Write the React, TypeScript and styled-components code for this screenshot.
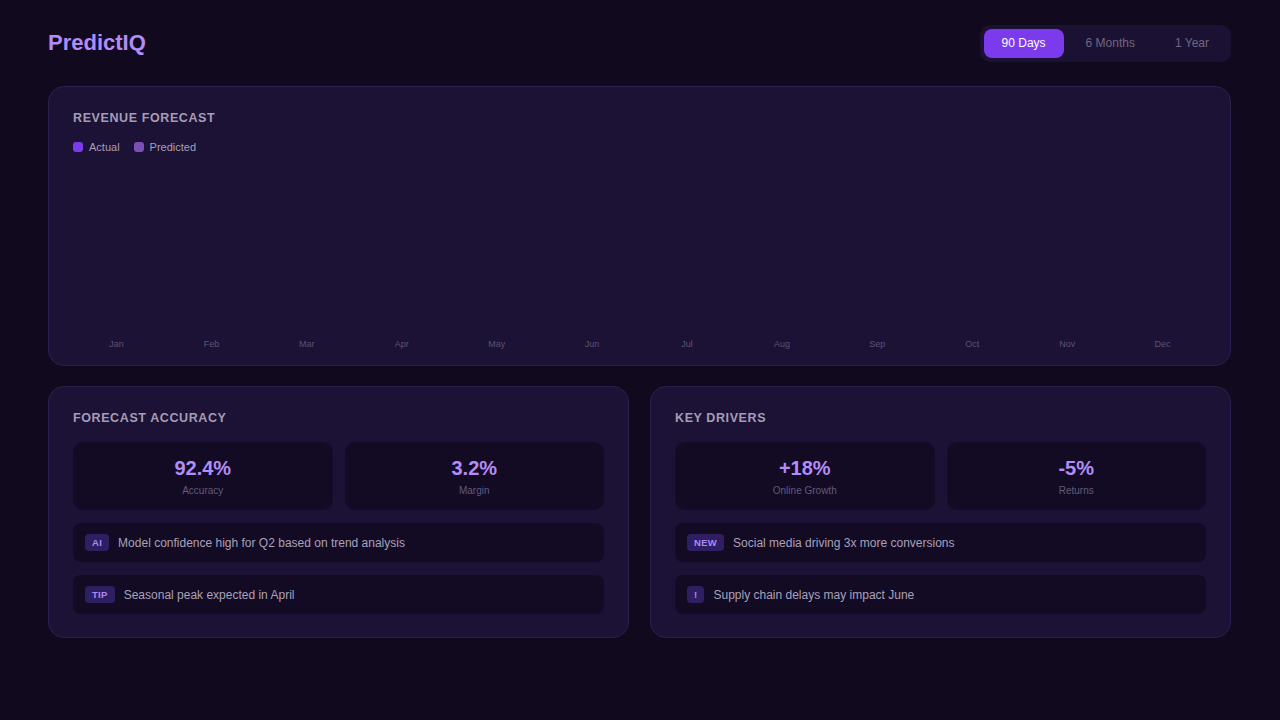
import { FC } from "react";
import styled, { createGlobalStyle } from "styled-components";

const GlobalStyle = createGlobalStyle`
  html, body {
    margin: 0;
    padding: 0;
    background: #110a1e;
  }
  body {
    font-family: "Liberation Sans", Arial, sans-serif;
    color: #e4dcf5;
  }
  * { box-sizing: border-box; }
`;

const Page = styled.div`
  width: 1280px;
  min-height: 720px;
  padding: 24px 49px 40px 48px;
  display: flex;
  flex-direction: column;
`;

const Header = styled.header`
  display: flex;
  justify-content: space-between;
  align-items: center;
  height: 38px;
  margin-bottom: 24px;
`;

const Logo = styled.h1`
  margin: 0;
  font-size: 22px;
  font-weight: 700;
  color: #b28cf8;
`;

const Toggle = styled.div`
  display: flex;
  gap: 4px;
  padding: 4px;
  background: #1b1233;
  border-radius: 10px;
`;

const ToggleButton = styled.button<{ $active?: boolean }>`
  border: none;
  font-family: inherit;
  font-size: 12px;
  height: 29px;
  padding: 0 18px;
  border-radius: 8px;
  cursor: pointer;
  background: ${({ $active }) => ($active ? "#7c3aed" : "transparent")};
  color: ${({ $active }) => ($active ? "#ffffff" : "#6f6683")};
`;

const Card = styled.section`
  background: #1b1236;
  border: 1px solid #2b1f4d;
  border-radius: 16px;
  padding: 24px;
`;

const ChartCard = styled(Card)`
  height: 280px;
  display: flex;
  flex-direction: column;
  padding-bottom: 16px;
  margin-bottom: 20px;
`;

const Title = styled.h2`
  margin: 0;
  font-size: 12.5px;
  font-weight: 700;
  letter-spacing: 0.6px;
  color: #a59db5;
  line-height: 15px;
`;

const Legend = styled.div`
  display: flex;
  gap: 14px;
  margin-top: 15px;
`;

const LegendItem = styled.div`
  display: flex;
  align-items: center;
  gap: 6px;
  font-size: 11px;
  color: #a79fb8;
`;

const Swatch = styled.span<{ color: string }>`
  width: 10px;
  height: 10px;
  border-radius: 3px;
  background: ${({ color }) => color};
`;

const Bars = styled.div`
  flex: 1;
  display: grid;
  grid-template-columns: repeat(12, 1fr);
  gap: 8px;
  align-items: end;
`;

const BarColumn = styled.div`
  display: flex;
  flex-direction: column;
  align-items: center;
  justify-content: flex-end;
  height: 100%;
`;

const MonthLabel = styled.span`
  font-size: 9px;
  color: #5c5475;
`;

const Row = styled.div`
  display: grid;
  grid-template-columns: 1fr 1fr;
  gap: 21px;
`;

const BottomCard = styled(Card)`
  height: 252px;
`;

const Stats = styled.div`
  display: grid;
  grid-template-columns: 1fr 1fr;
  gap: 12px;
  margin-top: 16px;
`;

const StatBox = styled.div`
  background: #130b24;
  border-radius: 10px;
  height: 68px;
  display: flex;
  flex-direction: column;
  align-items: center;
  justify-content: center;
  gap: 5px;
`;

const StatValue = styled.div`
  font-size: 20px;
  font-weight: 700;
  color: #b28cf8;
`;

const StatLabel = styled.div`
  font-size: 10px;
  color: #625a78;
`;

const Insights = styled.div`
  display: flex;
  flex-direction: column;
  gap: 13px;
  margin-top: 13px;
`;

const Insight = styled.div`
  background: #130b24;
  border-radius: 8px;
  height: 39px;
  display: flex;
  align-items: center;
  gap: 9px;
  padding: 0 12px;
  font-size: 12px;
  color: #a9a1b9;
`;

const Badge = styled.span`
  background: #2e1f63;
  color: #a98af5;
  font-size: 9.5px;
  font-weight: 700;
  padding: 3px 7px;
  border-radius: 4px;
  letter-spacing: 0.3px;
`;

const months = ["Jan", "Feb", "Mar", "Apr", "May", "Jun", "Jul", "Aug", "Sep", "Oct", "Nov", "Dec"];

interface PanelProps {
  title: string;
  stats: { value: string; label: string }[];
  insights: { tag: string; text: string }[];
}

const Panel: FC<PanelProps> = ({ title, stats, insights }) => (
  <BottomCard>
    <Title>{title}</Title>
    <Stats>
      {stats.map((s) => (
        <StatBox key={s.label}>
          <StatValue>{s.value}</StatValue>
          <StatLabel>{s.label}</StatLabel>
        </StatBox>
      ))}
    </Stats>
    <Insights>
      {insights.map((i) => (
        <Insight key={i.text}>
          <Badge>{i.tag}</Badge>
          {i.text}
        </Insight>
      ))}
    </Insights>
  </BottomCard>
);

const App: FC = () => {
  return (
    <>
      <GlobalStyle />
      <Page>
        <Header>
          <Logo>PredictIQ</Logo>
          <Toggle>
            <ToggleButton $active>90 Days</ToggleButton>
            <ToggleButton>6 Months</ToggleButton>
            <ToggleButton>1 Year</ToggleButton>
          </Toggle>
        </Header>

        <ChartCard>
          <Title>REVENUE FORECAST</Title>
          <Legend>
            <LegendItem>
              <Swatch color="#7c3aed" />
              Actual
            </LegendItem>
            <LegendItem>
              <Swatch color="#7a4fb8" />
              Predicted
            </LegendItem>
          </Legend>
          <Bars>
            {months.map((m) => (
              <BarColumn key={m}>
                <MonthLabel>{m}</MonthLabel>
              </BarColumn>
            ))}
          </Bars>
        </ChartCard>

        <Row>
          <Panel
            title="FORECAST ACCURACY"
            stats={[
              { value: "92.4%", label: "Accuracy" },
              { value: "3.2%", label: "Margin" },
            ]}
            insights={[
              { tag: "AI", text: "Model confidence high for Q2 based on trend analysis" },
              { tag: "TIP", text: "Seasonal peak expected in April" },
            ]}
          />
          <Panel
            title="KEY DRIVERS"
            stats={[
              { value: "+18%", label: "Online Growth" },
              { value: "-5%", label: "Returns" },
            ]}
            insights={[
              { tag: "NEW", text: "Social media driving 3x more conversions" },
              { tag: "!", text: "Supply chain delays may impact June" },
            ]}
          />
        </Row>
      </Page>
    </>
  );
};

export default App;
